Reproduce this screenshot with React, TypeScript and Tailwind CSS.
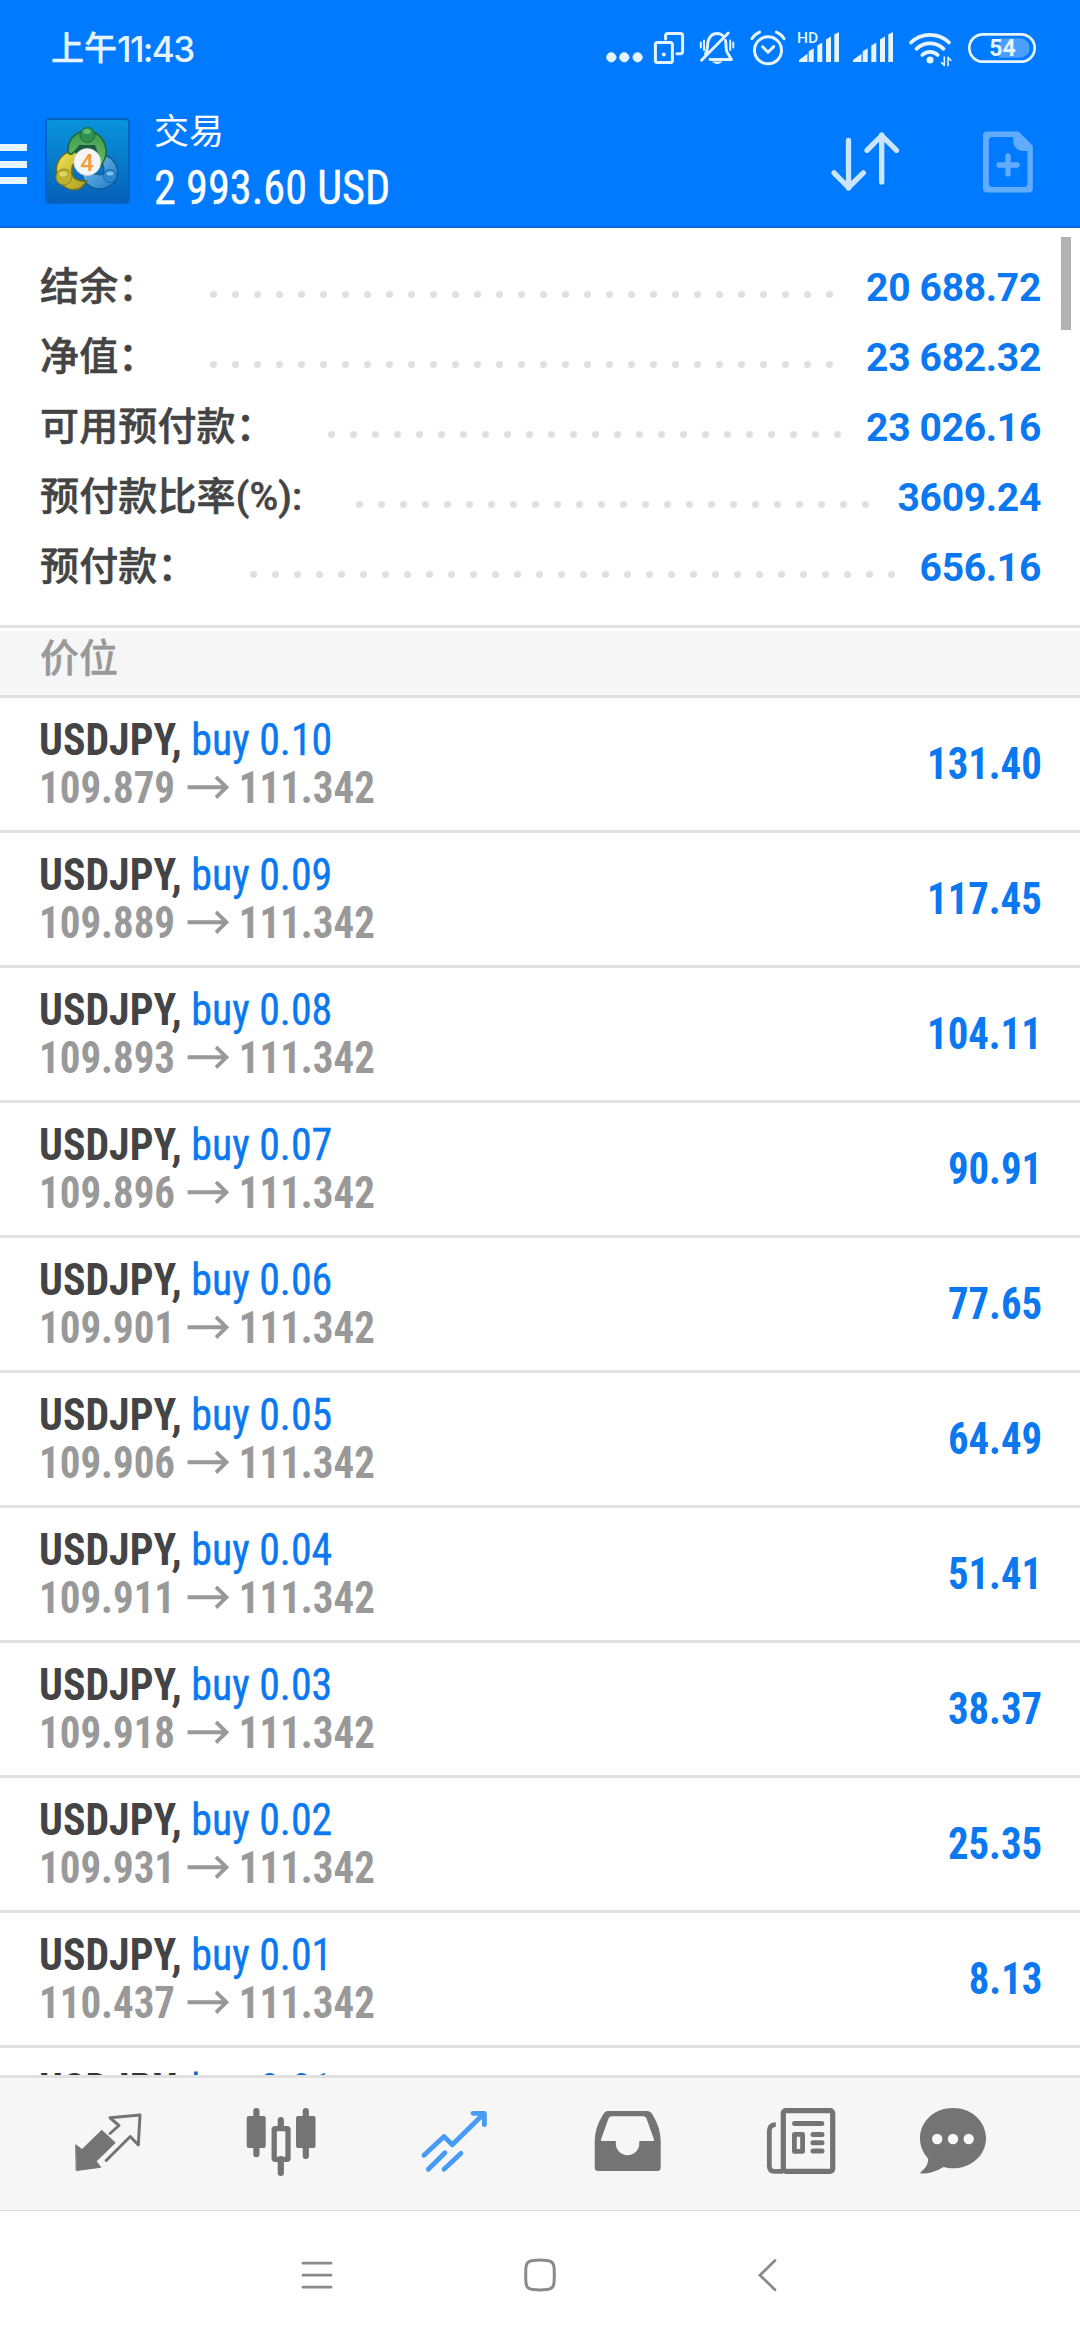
import type { ReactNode } from "react";

interface SummaryItem {
  label: string;
  value: string;
  dots: number;
}

interface Position {
  symbol: string;
  side: string;
  open: string;
  current: string;
  profit: string;
}

const summary: SummaryItem[] = [
  { label: "结余：", value: "20 688.72", dots: 29 },
  { label: "净值：", value: "23 682.32", dots: 29 },
  { label: "可用预付款：", value: "23 026.16", dots: 24 },
  { label: "预付款比率(%):", value: "3609.24", dots: 24 },
  { label: "预付款：", value: "656.16", dots: 30 }
];

const positions: Position[] = [
  { symbol: "USDJPY", side: "buy 0.10", open: "109.879", current: "111.342", profit: "131.40" },
  { symbol: "USDJPY", side: "buy 0.09", open: "109.889", current: "111.342", profit: "117.45" },
  { symbol: "USDJPY", side: "buy 0.08", open: "109.893", current: "111.342", profit: "104.11" },
  { symbol: "USDJPY", side: "buy 0.07", open: "109.896", current: "111.342", profit: "90.91" },
  { symbol: "USDJPY", side: "buy 0.06", open: "109.901", current: "111.342", profit: "77.65" },
  { symbol: "USDJPY", side: "buy 0.05", open: "109.906", current: "111.342", profit: "64.49" },
  { symbol: "USDJPY", side: "buy 0.04", open: "109.911", current: "111.342", profit: "51.41" },
  { symbol: "USDJPY", side: "buy 0.03", open: "109.918", current: "111.342", profit: "38.37" },
  { symbol: "USDJPY", side: "buy 0.02", open: "109.931", current: "111.342", profit: "25.35" },
  { symbol: "USDJPY", side: "buy 0.01", open: "110.437", current: "111.342", profit: "8.13" }
];

export default function App() {
  return (
    <div className="flex h-[2340px] w-[1080px] flex-col overflow-hidden bg-white font-['Roboto','Noto_Sans_CJK_SC',sans-serif]">
      <header className="flex h-[228px] shrink-0 flex-col border-b-2 border-[#0c68d2] bg-[#007aff] text-white">
        <StatusBar />
        <TitleBar />
      </header>

      <main className="relative min-h-0 flex-1 overflow-hidden">
        <div className="absolute top-[9px] right-[9px] h-[93px] w-[10px] bg-[#b2b2b2]" />
        <section className="border-b-[3px] border-[#e1e1e1] pt-6 pr-[39px] pb-[23px] pl-10">
          {summary.map((item) => (
            <SummaryRow key={item.label} item={item} />
          ))}
        </section>
        <div className="mt-[3px] flex h-[67px] border-b-[3px] border-[#e1e1e1] bg-[#f6f6f6] pl-10 text-[39px] leading-[57px] font-medium text-[#999] [-webkit-text-stroke:0.4px]">
          价位
        </div>
        {positions.map((position) => (
          <PositionRow key={position.side} position={position} />
        ))}
        {/* next row, cut by the tab bar */}
        <div className="h-[27px] overflow-hidden px-[39px] pt-[18px] font-['Roboto_Condensed','Roboto',sans-serif] text-[45px] leading-[48px] font-bold text-[#333] [font-stretch:75%]">
          <div className="origin-left scale-x-[0.93]">
            USDJPY, <span className="font-normal text-[#0a6bd0]">buy 0.01</span>
          </div>
        </div>
      </main>

      <TabBar />
      <SystemNav />
    </div>
  );
}

function StatusBar() {
  return (
    <div className="flex h-[100px] shrink-0 items-start justify-between pr-10 pl-[51px] text-[#e6f4ff]">
      <div className="flex pt-7 leading-[42px] font-medium">
        <span className="text-[33px] [-webkit-text-stroke:0.3px]">上午</span>
        <span className="font-['Inter',sans-serif] text-[35px] tracking-[-1.6px]">11:43</span>
      </div>
      <div className="flex pt-7">
        <StatusIcon viewBox="24 0 42 40" className="w-[42px]">
          <g fill="currentColor">
            <circle cx="31.3" cy="29.3" r="4.6" />
            <circle cx="44.3" cy="29.3" r="4.6" />
            <circle cx="57.6" cy="29.3" r="4.6" />
          </g>
        </StatusIcon>
        <StatusIcon viewBox="66 0 46 40" className="w-[46px]">
          <rect x="75.4" y="14.6" width="17" height="20" rx="2.2" strokeWidth="3" />
          <circle cx="83.8" cy="26.6" r="2" fill="currentColor" stroke="none" />
          <path d="M85.6 11V7.7q0-2.2 2.2-2.2h12.6q2.2 0 2.2 2.2v15.9q0 2.2-2.2 2.2H97" strokeWidth="3" />
        </StatusIcon>
        <StatusIcon viewBox="112 0 48 40" className="w-12">
          <path d="M148.3 5 121.5 32.3M125.5 26c2.4-4 1.8-8.5 2.5-12.5 1.4-5 5-8 9-8 2 0 4 .6 5.5 1.8M145.5 12.5c1 4.5-.2 8.5 1.6 11.7l4.4 7.3H130" strokeWidth="2.9" />
          <path d="M120.8 14.5v5M124 12.5v9.5M150.2 12.5v9.5M153.3 14.5v5" strokeWidth="2" />
          <path d="M132 33.5h10.5c-2.5 3.3-8 3.3-10.5 0z" fill="currentColor" stroke="none" />
        </StatusIcon>
        <StatusIcon viewBox="160 0 50 40" className="w-[50px]">
          <circle cx="188" cy="22.3" r="13.5" strokeWidth="3" />
          <path d="M182.6 18.8l5.4 5.5 5.7-5.7M171.9 10.7q3-4.7 7.7-6.6M196.4 4.1q4.7 1.9 7.7 6.6" strokeWidth="3" />
        </StatusIcon>
        <StatusIcon viewBox="210 0 56 40" className="w-14">
          <text x="217" y="15.2" fontSize="15.5" fontWeight="500" fill="currentColor" stroke="none">
            HD
          </text>
          <SignalBars />
        </StatusIcon>
        <StatusIcon viewBox="212 0 56 40" className="w-14">
          <SignalBars />
        </StatusIcon>
        <StatusIcon viewBox="322 0 58 40" className="w-[58px]">
          <path d="M331 14.5a27.5 27.5 0 0 1 38 0M336.5 20.8a19.5 19.5 0 0 1 27 0M342.3 27a11 11 0 0 1 15.4 0" strokeWidth="3.8" />
          <circle cx="350" cy="32" r="3.5" fill="currentColor" stroke="none" />
          <path d="M364.3 29v8.5l-2.8-3M368 37.8v-8.5l2.8 3" strokeWidth="1.6" />
        </StatusIcon>
        <StatusIcon viewBox="379 0 80 40" className="w-20">
          <path d="M418 10.3h21a9.7 9.7 0 0 1 0 19.4h-21z" fill="#4a9fff" stroke="none" />
          <rect x="388.3" y="6.3" width="65.4" height="27.4" rx="13.7" strokeWidth="2.7" />
          <text x="421.5" y="28.4" textAnchor="middle" fontSize="23" fontWeight="700" fill="currentColor" stroke="none">
            54
          </text>
        </StatusIcon>
      </div>
    </div>
  );
}

interface StatusIconProps {
  viewBox: string;
  className: string;
  children: ReactNode;
}

function StatusIcon({ viewBox, className, children }: StatusIconProps) {
  return (
    <svg
      viewBox={viewBox}
      className={`h-10 ${className}`}
      fill="none"
      stroke="currentColor"
      strokeLinecap="round"
      strokeLinejoin="round"
    >
      {children}
    </svg>
  );
}

function SignalBars() {
  return (
    <path
      d="M219 34v-2l8.5-6.3V34zM228.7 34V23.3l5-3V34zM237.3 34V17.6l5-3V34zM246 34V11.6l5-3V34zM254.3 34V6.5l4.7-2.5V34z"
      fill="currentColor"
      stroke="none"
    />
  );
}

function TitleBar() {
  return (
    <div className="flex flex-1 items-start">
      <div className="mt-11 flex h-10 w-[27px] flex-col justify-between">
        <span className="h-[7px] bg-[#e6f4ff]" />
        <span className="h-[7px] bg-[#e6f4ff]" />
        <span className="h-[7px] bg-[#e6f4ff]" />
      </div>
      <Logo />
      <div className="ml-6 flex flex-1 flex-col gap-[13px] pt-[15px]">
        <span className="text-[35px] leading-[36px]">交易</span>
        <span className="origin-left scale-x-[0.923] font-['Roboto_Condensed','Roboto',sans-serif] text-[48px] leading-[48px] [font-stretch:75%] [-webkit-text-stroke:0.4px]">
          2 993.60 USD
        </span>
      </div>
      <div className="flex gap-[70px] pt-7 pr-11">
        <svg viewBox="0 0 90 70" className="h-[70px] w-[90px]" fill="none" stroke="#cce5ff" strokeWidth="5.3" strokeLinecap="round" strokeLinejoin="round">
          <path d="M28.5 12.5V60M14 44.8 28.5 59.5 43.3 44.8M61.7 54V7M47 22.3 61.7 7.5 76.5 22.3" />
        </svg>
        <svg viewBox="0 0 56 70" className="h-[70px] w-14" fill="none">
          <path
            fillRule="evenodd"
            fill="#62acff"
            d="M7 3.5h31.5L52.8 17.8V60.5q0 4-4 4H7q-4 0-4-4V7.5q0-4 4-4zM12.5 9q-3.7 0-3.7 3.7v42.5q0 3.7 3.7 3.7h31.3q3.7 0 3.7-3.7V23H43.5Q33.3 22 33.3 13V9z"
          />
          <path d="M28 28v18M19 37h18" stroke="#62acff" strokeWidth="5.3" strokeLinecap="round" />
        </svg>
      </div>
    </div>
  );
}

function Logo() {
  return (
    <svg viewBox="0 0 85 86" className="mt-[18px] ml-[18px] h-[86px] w-[85px]">
      <defs>
        <linearGradient id="tile" x1="0" y1="0" x2="0" y2="1">
          <stop offset="0" stopColor="#0a94dc" />
          <stop offset="1" stopColor="#0560b8" />
        </linearGradient>
        <linearGradient id="green" x1="0" y1="0" x2="0" y2="1">
          <stop offset="0" stopColor="#3d9c50" />
          <stop offset="1" stopColor="#6fc060" />
        </linearGradient>
        <linearGradient id="yellow" x1="0" y1="0" x2="1" y2="1">
          <stop offset="0" stopColor="#f3e653" />
          <stop offset="1" stopColor="#a79b22" />
        </linearGradient>
        <linearGradient id="blue" x1="0" y1="0" x2="1" y2="1">
          <stop offset="0" stopColor="#7cc4ee" />
          <stop offset="1" stopColor="#1c78c4" />
        </linearGradient>
      </defs>
      <rect x="1" y="1" width="83" height="84" rx="3" fill="url(#tile)" stroke="#0763c0" strokeWidth="2" />
      <path d="M53 39C66 34 75 48 72 59 69 69 56 74 46 69 41 66 38 62 37 56L52 56C60 59 62 51 53 39z" fill="url(#blue)" stroke="#0f5c9a" strokeWidth="1.5" />
      <path d="M32 34C18 31 9 45 12 57 15 69 26 75 36 70L42 63C32 64 27 60 27 54 26 47 29 44 36 44z" fill="url(#yellow)" stroke="#6e7020" strokeWidth="1.5" />
      <path d="M23 32C23 20 32 13 42 13 54 13 62 24 61 36 60 43 57 47 53 51L49 30 35 28 29 34C26 38 23 36 23 32z" fill="url(#green)" stroke="#1c6535" strokeWidth="1.5" />
      <path d="M34 27 50 27 53 35 49 44 36 44 30 34z" fill="#1c5a45" />
      <circle cx="42.5" cy="17" r="7.5" fill="#2f9150" stroke="#1d6b3a" />
      <ellipse cx="42" cy="13.5" rx="4" ry="2.5" fill="#62bd74" />
      <circle cx="19" cy="59" r="8" fill="#bdb12d" stroke="#8c8424" />
      <ellipse cx="18" cy="56" rx="4" ry="2.5" fill="#e0d662" />
      <circle cx="65" cy="58" r="6.5" fill="#2d89cf" stroke="#1666a8" />
      <ellipse cx="65" cy="55.5" rx="3.5" ry="2" fill="#7cc1ee" />
      <circle cx="42.3" cy="44" r="13.5" fill="#f4f6f6" stroke="#c8d2d2" strokeWidth="0.8" />
      <text x="42" y="52.5" textAnchor="middle" fontSize="24" fontWeight="500" fill="#f59a3c">
        4
      </text>
    </svg>
  );
}

function SummaryRow({ item }: { item: SummaryItem }) {
  return (
    <div className="flex h-[70px] items-center text-[39px] leading-[70px]">
      <span className="font-medium tracking-[0.15px] text-[#444] [-webkit-text-stroke:0.5px]">{item.label}</span>
      <div className="ml-[53px] flex gap-[15px] pt-3.5">
        {Array.from({ length: item.dots }, (_, index) => (
          <span key={index} className="size-[7px] rounded-full bg-[#e0e0e0]" />
        ))}
      </div>
      <span className="ml-auto pt-px font-bold tracking-[-0.3px] text-[#0a78f0]">{item.value}</span>
    </div>
  );
}

function PositionRow({ position }: { position: Position }) {
  return (
    <div className="flex h-[135px] items-start justify-between border-b-[3px] border-[#e1e1e1] px-[39px] font-['Roboto_Condensed','Roboto',sans-serif] text-[45px] leading-[48px] font-bold [font-stretch:75%]">
      <div className="pt-[18px]">
        <div className="origin-left scale-x-[0.93] text-[#444]">
          {position.symbol}, <span className="font-normal text-[#0a78f0] [-webkit-text-stroke:0.4px]">{position.side}</span>
        </div>
        <div className="flex origin-left scale-x-[0.91] items-center text-[#999]">
          <span>{position.open}</span>
          <svg viewBox="0 0 46 24" className="mr-[11px] ml-[13px] h-6 w-[46px]" fill="none" stroke="currentColor" strokeWidth="4">
            <path d="M0 11.2h43M31.5 1 43 11.2 31.5 21.4" />
          </svg>
          <span>{position.current}</span>
        </div>
      </div>
      <span className="origin-right translate-x-px scale-x-[0.905] leading-[132px] text-[#0a78f0]">{position.profit}</span>
    </div>
  );
}

function TabBar() {
  return (
    <nav className="flex h-[136px] shrink-0 items-start border-t-[3px] border-b border-t-[#e1e1e1] border-b-[#dcdcdc] bg-[#f6f6f6] pt-3 pl-[23px] text-[#747474]">
      <TabIcon>
        <path d="M23 55 29 59.5 48.7 40.3 62.2 52.7 43.2 71.3 47.7 77.3 23.5 80.5z" fill="currentColor" stroke="currentColor" strokeWidth="1" />
        <path d="M57 43.5 66 35.5 57 27.8 87 25 85.3 55 77.3 46.5 53.2 70.5" stroke="currentColor" strokeWidth="3" />
      </TabIcon>
      <TabIcon>
        <g fill="currentColor">
          <rect x="20.7" y="26" width="19" height="32" rx="2" />
          <rect x="27.3" y="18" width="6.2" height="49.3" rx="3" />
          <rect x="70" y="26" width="19.5" height="32" rx="2" />
          <rect x="76.7" y="18" width="6.2" height="51" rx="3" />
          <rect x="51.7" y="27" width="6.2" height="14" rx="3" />
          <rect x="51.7" y="66" width="6.2" height="20" rx="3" />
        </g>
        <rect x="48.2" y="38.7" width="13.8" height="30.6" rx="1" stroke="currentColor" strokeWidth="5.3" />
      </TabIcon>
      <TabIcon>
        <path
          d="M25 65.3 45 46.5 53.3 54.8 84.5 24M74 23.3H85.4V34.7M29.3 79.3 46 62.7M45 79.3 62 63.3"
          stroke="#469bf5"
          strokeWidth="4.8"
        />
      </TabIcon>
      <TabIcon>
        <path
          fill="currentColor"
          fillRule="evenodd"
          d="M36 21H75Q78.5 21 80.5 24.5 88.7 38 88.7 51V77.5Q88.7 81 85.2 81H26.2Q22.7 81 22.7 77.5V51Q22.7 38 31 24.5 33 21 36 21zM40 26.2Q37.5 26.2 36.5 28.5L29 49.5Q28.5 51 30 51H43.8V53.5A11.7 11.7 0 0 0 67.3 53.5V51H81Q82.5 51 82 49.5L74.5 28.5Q73.5 26.2 71 26.2z"
        />
      </TabIcon>
      <TabIcon>
        <rect x="38.3" y="20.6" width="49.4" height="60.7" rx="2.5" stroke="currentColor" strokeWidth="5.2" />
        <path d="M30.8 34.6Q24.3 34.6 24.3 41V76Q24.3 81.3 29.5 81.3H38" stroke="currentColor" strokeWidth="4.8" strokeLinecap="butt" />
        <path d="M49.6 33.4H76.8M68 44.6H77M68 52.7H77M68 60.9H77" stroke="currentColor" strokeWidth="5" />
        <rect x="49.4" y="44.4" width="8.2" height="17" stroke="currentColor" strokeWidth="4.8" />
      </TabIcon>
      <TabIcon>
        <path
          fill="currentColor"
          d="M35 18C53.5 18 68 31.3 68 48.2 68 65 53.5 78.3 35 78.3 31.5 78.3 28.5 78 25.6 77 18 81.5 11.5 83.5 3.5 83.6 2 83.6 2.2 82.5 3 81.7 7.5 78.5 10.3 74 10.2 68.5 5 63 2 56 2 48.2 2 31.3 16.5 18 35 18z"
        />
        <g fill="#f8f8f8">
          <circle cx="19.2" cy="49" r="5.2" />
          <circle cx="35" cy="49" r="5.2" />
          <circle cx="50.7" cy="49" r="5.2" />
        </g>
      </TabIcon>
    </nav>
  );
}

function TabIcon({ children }: { children: ReactNode }) {
  return (
    <button type="button" className="flex w-[173px] shrink-0 justify-center">
      <svg viewBox="0 0 113 100" className="h-[100px] w-[113px]" fill="none" strokeLinecap="round" strokeLinejoin="round">
        {children}
      </svg>
    </button>
  );
}

function SystemNav() {
  return (
    <div className="flex h-[129px] shrink-0 items-start bg-white pt-[46px] pl-[301px] text-[#8a8a8a]">
      <svg viewBox="0 0 32 36" className="h-9 w-8" fill="none" stroke="currentColor" strokeWidth="2.8" strokeLinecap="round">
        <path d="M2 6.2h28M2 18.2h28M2 30.2h28" />
      </svg>
      <svg viewBox="0 0 32 36" className="ml-[191px] h-9 w-8" fill="none" stroke="currentColor" strokeWidth="3">
        <path d="M9 3.5Q16 2.7 23 3.5 29.5 4 30 10 30.6 18 30 26 29.5 32 23 32.5 16 33.3 9 32.5 2.5 32 2 26 1.4 18 2 10 2.5 4 9 3.5z" />
      </svg>
      <svg viewBox="0 0 20 36" className="ml-[201px] h-9 w-5" fill="none" stroke="currentColor" strokeWidth="2.8" strokeLinecap="round">
        <path d="M18 3.5 3 18.2 18 32.8" />
      </svg>
    </div>
  );
}
